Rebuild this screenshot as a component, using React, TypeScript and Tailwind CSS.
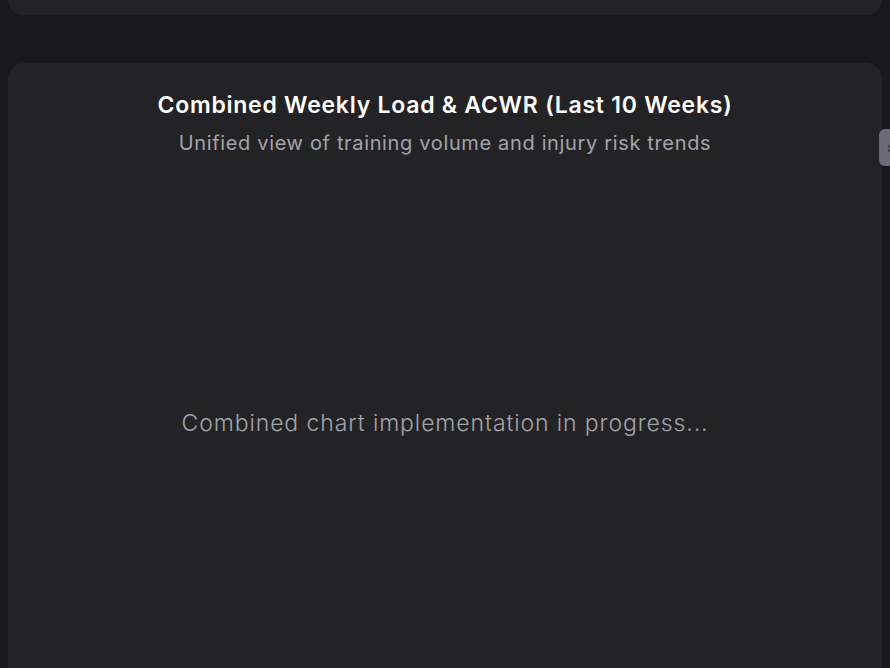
export default function App() {
  return (
    <div
      className="relative min-h-screen overflow-hidden bg-[#19191b] px-2"
      style={{ fontFamily: 'Inter, "Noto Sans", sans-serif' }}
    >
      <div className="h-[15px] rounded-b-2xl bg-[#232325]" />

      <div className="mt-12 h-[640px] rounded-t-2xl bg-[#232325] pt-[27px] text-center">
        <h2 className="text-[23px] font-semibold leading-[30px] tracking-[0.75px] text-white">
          Combined Weekly Load &amp; ACWR (Last 10 Weeks)
        </h2>
        <p className="mt-[10px] text-[20px] leading-[27px] tracking-[0.65px] text-[#a3a3aa]">
          Unified view of training volume and injury risk trends
        </p>
        <div className="flex h-[520px] items-center justify-center pt-[12px]">
          <span className="text-[23px] font-light tracking-[0.9px] text-[#a3a3aa]">
            Combined chart implementation in progress...
          </span>
        </div>
      </div>

      <button className="absolute right-[-12px] top-[129px] flex h-[37px] w-[23px] items-center justify-start rounded-l-md bg-[#6b6a75] pl-[7px] text-[15px] leading-none text-[#2a2a2e]">
        ×
      </button>
    </div>
  );
}
